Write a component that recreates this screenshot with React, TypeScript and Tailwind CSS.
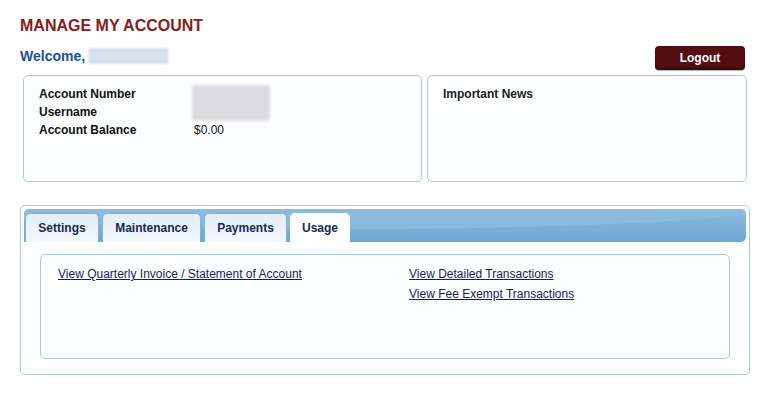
import React from "react";

export default function App() {
  const tabs = ["Settings", "Maintenance", "Payments", "Usage"];
  return (
    <div
      className="w-[760px] h-[407px] bg-white overflow-hidden"
      style={{ fontFamily: '"Liberation Sans", Arial, sans-serif' }}
    >
      <div className="pl-[20px] pr-[10px] pt-[16px]">
        <h1 className="text-[16px] leading-[20px] font-bold text-[#8b1a1a]">
          MANAGE MY ACCOUNT
        </h1>
        <div className="flex items-start justify-between h-[24px] mt-[10px] pr-[5px]">
          <div className="flex items-center h-[18px] mt-[1px]">
            <span className="text-[14px] leading-[18px] font-bold text-[#1d5192]">Welcome,</span>
            <span className="ml-[4px] w-[79px] h-[16px] bg-[#d6e1ee] blur-[1px]" />
          </div>
          <button className="w-[90px] h-[24px] rounded-[4px] bg-[#520e10] text-white text-[12px] font-bold shadow-[inset_0_-2px_2px_rgba(0,0,0,0.35),0_1px_1px_rgba(0,0,0,0.3)]">
            Logout
          </button>
        </div>

        <div className="flex gap-[5px] mt-[5px] ml-[3px]">
          <div className="w-[399px] h-[107px] border border-[#a8cbe2] rounded-[5px] bg-[#fdfeff] pl-[15px] pt-[9px]">
            <div className="grid grid-cols-[153px_1fr] text-[12px] leading-[18px] text-[#111]">
              <div className="font-bold">Account Number</div>
              <div className="row-span-2">
                <div className="w-[78px] h-[36px] bg-[#dcdcde] blur-[1.5px]" />
              </div>
              <div className="font-bold">Username</div>
              <div className="font-bold">Account Balance</div>
              <div className="pl-[2px]">$0.00</div>
            </div>
          </div>
          <div className="w-[320px] h-[107px] border border-[#a8cbe2] rounded-[5px] bg-[#fdfeff] pl-[15px] pt-[9px]">
            <div className="text-[12px] leading-[18px] font-bold text-[#222]">Important News</div>
          </div>
        </div>

        <div className="mt-[23px] w-[730px] h-[170px] border border-[#a8cbe2] rounded-[5px] bg-white p-[3px]">
          <div className="relative h-[33px] rounded-t-[5px] rounded-br-[5px] bg-gradient-to-b from-[#8dbbdd] to-[#6ea7d3] overflow-hidden">
            <div className="absolute left-[-100px] right-[-40px] top-[-30px] h-[50px] rounded-[50%] bg-[#8dbbdd] opacity-80" />
            <div className="relative flex items-end gap-[3px] h-full pl-[1px]">
              {tabs.map((t, i) => {
                const active = i === tabs.length - 1;
                const widths = ["w-[74px]", "w-[99px]", "w-[83px]", "w-[60px]"];
                return (
                  <div
                    key={t}
                    className={`${widths[i]} h-[29px] rounded-t-[5px] flex items-center justify-center text-[12px] font-bold text-[#1b2a4e] ${
                      active
                        ? "bg-[#fdfeff]"
                        : "bg-gradient-to-b from-[#e2eef9] to-[#f2f7fc] border-x border-t border-[#7fb0d6]"
                    }`}
                  >
                    {t}
                  </div>
                );
              })}
            </div>
          </div>
          <div className="bg-[#fdfeff] px-[16px] pt-[12px]">
            <div className="h-[105px] border border-[#a8cbe2] rounded-[5px] bg-[#fdfeff] flex items-start pl-[17px] pt-[9px]">
              <div className="w-[351px] flex flex-col items-start">
                <a href="#" className="text-[12px] leading-[20px] text-[#1c1c5a] underline">
                  View Quarterly Invoice / Statement of Account
                </a>
              </div>
              <div className="flex flex-col items-start">
                <a href="#" className="text-[12px] leading-[20px] text-[#1c1c5a] underline">
                  View Detailed Transactions
                </a>
                <a href="#" className="text-[12px] leading-[20px] text-[#1c1c5a] underline">
                  View Fee Exempt Transactions
                </a>
              </div>
            </div>
          </div>
        </div>
      </div>
    </div>
  );
}
